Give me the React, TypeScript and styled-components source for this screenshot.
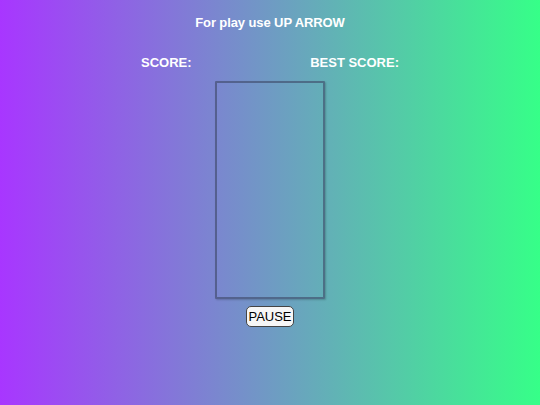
import styled, { createGlobalStyle } from 'styled-components';

const GlobalStyle = createGlobalStyle`
    html, body {
        margin: 0;
        padding: 0;
    }
    body {
        font-family: 'Liberation Sans', Arial, sans-serif;
    }
`;

// Full page with the purple to green gradient
const Page = styled.div`
    width: 540px;
    height: 405px;
    box-sizing: border-box;
    display: flex;
    flex-direction: column;
    align-items: center;
    padding-top: 15px;
    background: linear-gradient(90deg, #a836ff, #36ff88);
`;

const Title = styled.h1`
    margin: 0;
    font-size: 13px;
    font-weight: 700;
    letter-spacing: -0.1px;
    color: #fff;
`;

const ScoreRow = styled.div`
    width: 258px;
    display: flex;
    justify-content: space-between;
    margin-top: 25px;
`;

const ScoreLabel = styled.span`
    font-size: 13px;
    font-weight: 700;
    color: #fff;
`;

const GameBoard = styled.div`
    width: 110px;
    height: 218px;
    box-sizing: border-box;
    margin-top: 11px;
    border: 2px solid rgba(60, 70, 100, 0.6);
    border-radius: 1px;
    box-shadow: 1px 1px 2px rgba(0, 0, 0, 0.2);
`;

const PauseButton = styled.button`
    margin-top: 7px;
    padding: 2px 1px;
    font-family: 'Liberation Sans', Arial, sans-serif;
    font-size: 13px;
    line-height: 15px;
    color: #000;
    background: #f6f6f6;
    border: 1px solid #444;
    border-radius: 5px;
    cursor: pointer;
`;

export default function App() {
    return (
        <>
            <GlobalStyle />
            <Page>
                <Title>For play use UP ARROW</Title>
                <ScoreRow>
                    <ScoreLabel>SCORE:</ScoreLabel>
                    <ScoreLabel>BEST SCORE:</ScoreLabel>
                </ScoreRow>
                <GameBoard />
                <PauseButton>PAUSE</PauseButton>
            </Page>
        </>
    );
}
